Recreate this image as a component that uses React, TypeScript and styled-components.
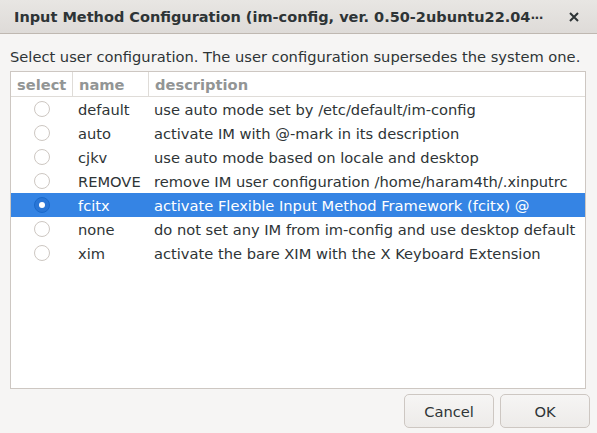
import React from "react";
import styled, { createGlobalStyle } from "styled-components";

const Global = createGlobalStyle`
  html, body { margin: 0; padding: 0; }
  body {
    width: 597px; height: 433px; overflow: hidden;
    background: #f6f5f4;
    font-family: "DejaVu Sans", sans-serif;
    font-size: 14.67px;
    color: #2e3436;
  }
`;

const Window = styled.div`
  width: 597px;
  height: 433px;
  display: flex;
  flex-direction: column;
  background: #f6f5f4;
`;

const TitleBar = styled.div`
  height: 34px;
  box-sizing: border-box;
  border-bottom: 1px solid #bfb8b1;
  background: linear-gradient(#e8e6e3, #dedbd8);
  display: flex;
  align-items: center;
  padding: 0 0 0 14px;
`;

const Title = styled.div`
  flex: 1;
  font-weight: bold;
  font-size: 14.5px;
  color: #2e3436;
  white-space: nowrap;
`;

const Ellipsis = styled.span`
  font-weight: bold;
  font-size: 12.5px;
  letter-spacing: -0.6px;
`;

const Close = styled.div`
  width: 46px;
  display: flex;
  justify-content: center;
  align-items: center;
`;

const Body = styled.div`
  flex: 1;
  display: flex;
  flex-direction: column;
  padding: 12px 0 0 0;
`;

const Label = styled.div`
  height: 25px;
  line-height: 21px;
  margin: 0 10px;
  white-space: nowrap;
`;

const Tree = styled.div`
  height: 318px;
  margin: 0 11px 0 10px;
  box-sizing: border-box;
  border: 1px solid #cdc7c2;
  background: #fff;
  display: flex;
  flex-direction: column;
`;

const Grid = styled.div`
  display: grid;
  grid-template-columns: 62px 76px 1fr;
`;

const HeadCell = styled.div<{ $last?: boolean }>`
  height: 25px;
  box-sizing: border-box;
  border-bottom: 1px solid #dfdcd8;
  border-right: ${(p) => (p.$last ? "none" : "1px solid #dfdcd8")};
  color: #929595;
  font-weight: bold;
  padding-left: 6px;
  display: flex;
  align-items: center;
`;

const Row = styled.div<{ $sel?: boolean }>`
  display: contents;
  & > div {
    background: ${(p) => (p.$sel ? "#3584e4" : "transparent")};
    color: ${(p) => (p.$sel ? "#ffffff" : "#2e3436")};
  }
`;

const Cell = styled.div`
  height: 24px;
  display: flex;
  align-items: center;
  padding-left: 5px;
  white-space: nowrap;
`;

const RadioCell = styled(Cell)`
  justify-content: center;
  padding-left: 0;
`;

const Radio = styled.span<{ $on?: boolean }>`
  width: 16px;
  height: 16px;
  border-radius: 50%;
  box-sizing: border-box;
  border: 1px solid ${(p) => (p.$on ? "#1b6acb" : "#cdc7c2")};
  background: ${(p) => (p.$on ? "#2a76d6" : "#fff")};
  display: flex;
  align-items: center;
  justify-content: center;
  &::after {
    content: "";
    display: ${(p) => (p.$on ? "block" : "none")};
    width: 6px;
    height: 6px;
    border-radius: 50%;
    background: #fff;
  }
`;

const Buttons = styled.div`
  display: flex;
  justify-content: flex-end;
  gap: 6px;
  padding: 5px 7px 0 0;
`;

const Button = styled.button`
  width: 90px;
  height: 34px;
  box-sizing: border-box;
  border: 1px solid #cdc7c2;
  border-radius: 5px;
  background: linear-gradient(#f6f5f4, #edebe9);
  font-family: "DejaVu Sans", sans-serif;
  font-size: 14.67px;
  color: #2e3436;
  padding: 0;
`;

const rows = [
  ["default", "use auto mode set by /etc/default/im-config"],
  ["auto", "activate IM with @-mark in its description"],
  ["cjkv", "use auto mode based on locale and desktop"],
  ["REMOVE", "remove IM user configuration /home/haram4th/.xinputrc"],
  ["fcitx", "activate Flexible Input Method Framework (fcitx) @"],
  ["none", "do not set any IM from im-config and use desktop default"],
  ["xim", "activate the bare XIM with the X Keyboard Extension"],
];

export default function App() {
  return (
    <Window>
      <Global />
      <TitleBar>
        <Title>
          Input Method Configuration (im-config, ver. 0.50-2ubuntu22.04
          <Ellipsis>···</Ellipsis>
        </Title>
        <Close>
          <svg width="10" height="10" viewBox="0 0 10 10">
            <path d="M1 1 L9 9 M9 1 L1 9" stroke="#2e3436" strokeWidth="2" />
          </svg>
        </Close>
      </TitleBar>
      <Body>
        <Label>Select user configuration. The user configuration supersedes the system one.</Label>
        <Tree>
          <Grid>
            <HeadCell>select</HeadCell>
            <HeadCell>name</HeadCell>
            <HeadCell $last>description</HeadCell>
            {rows.map(([n, d]) => (
              <Row key={n} $sel={n === "fcitx"}>
                <RadioCell>
                  <Radio $on={n === "fcitx"} />
                </RadioCell>
                <Cell>{n}</Cell>
                <Cell>{d}</Cell>
              </Row>
            ))}
          </Grid>
        </Tree>
        <Buttons>
          <Button>Cancel</Button>
          <Button>OK</Button>
        </Buttons>
      </Body>
    </Window>
  );
}
